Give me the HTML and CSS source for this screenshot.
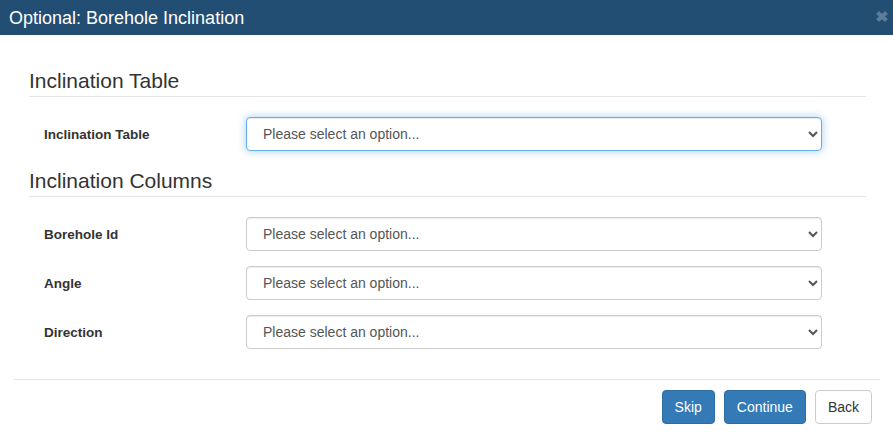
FILE: index.html
```html
<!DOCTYPE html>
<html>
<head>
<meta charset="utf-8">
<link rel="stylesheet" href="styles.css">
</head>
<body>
<div class="modal">
  <div class="modal-header">
    <h4 class="modal-title">Optional: Borehole Inclination</h4>
    <button class="close" type="button" aria-label="Close">
      <svg width="14" height="13" viewBox="0 0 14 13"><path d="M2.5 2.5 L11.5 10.5 M11.5 2.5 L2.5 10.5" stroke="currentColor" stroke-width="4" stroke-linecap="butt"/></svg>
    </button>
  </div>
  <div class="modal-body">
    <div class="legend">Inclination Table</div>
    <div class="form-row">
      <label class="form-label">Inclination Table</label>
      <select class="form-select focused"><option>Please select an option...</option></select>
    </div>
    <div class="legend">Inclination Columns</div>
    <div class="form-row">
      <label class="form-label">Borehole Id</label>
      <select class="form-select"><option>Please select an option...</option></select>
    </div>
    <div class="form-row">
      <label class="form-label">Angle</label>
      <select class="form-select"><option>Please select an option...</option></select>
    </div>
    <div class="form-row">
      <label class="form-label">Direction</label>
      <select class="form-select"><option>Please select an option...</option></select>
    </div>
  </div>
  <div class="modal-footer">
    <button class="btn btn-primary" type="button">Skip</button>
    <button class="btn btn-primary" type="button">Continue</button>
    <button class="btn btn-default" type="button">Back</button>
  </div>
</div>
</body>
</html>
```
FILE: styles.css
```css
* { box-sizing: border-box; }
html, body {
  margin: 0;
  padding: 0;
  background: #ffffff;
  font-family: "Liberation Sans", Arial, sans-serif;
  color: #333333;
}
.modal {
  width: 893px;
  height: 441px;
  background: #ffffff;
}
.modal-header {
  position: relative;
  height: 35px;
  background: #234e74;
  display: flex;
  align-items: center;
  padding: 0 9px;
}
.modal-title {
  margin: 0;
  font-size: 18px;
  font-weight: normal;
  color: #ffffff;
  line-height: 1;
}
.close {
  position: absolute;
  right: 4px;
  top: 10px;
  width: 14px;
  height: 13px;
  padding: 0;
  border: 0;
  background: transparent;
  color: #5d7c9a;
  display: flex;
  align-items: center;
  justify-content: center;
}
.modal-body {
  padding: 31px 27px 15px 29px;
}
.legend {
  font-size: 21px;
  line-height: 30px;
  height: 31px;
  color: #333333;
  border-bottom: 1px solid #e5e5e5;
  margin-bottom: 20px;
}
.form-row {
  display: flex;
  align-items: center;
  height: 34px;
  margin-bottom: 15px;
}
.form-label {
  width: 217px;
  padding-left: 15px;
  font-size: 13.5px;
  font-weight: bold;
  color: #333333;
}
.form-select {
  width: 576px;
  height: 34px;
  padding: 6px 8px 6px 12px;
  font-family: "Liberation Sans", Arial, sans-serif;
  font-size: 14px;
  color: #555555;
  background: #ffffff;
  border: 1px solid #cccccc;
  border-radius: 4px;
  box-shadow: inset 0 1px 1px rgba(0,0,0,.075);
  outline: none;
}
.form-select.focused {
  border-color: #66afe9;
  box-shadow: inset 0 1px 1px rgba(0,0,0,.075), 0 0 8px rgba(102,175,233,.6);
}
.modal-footer {
  margin: 0 13px 0 14px;
  border-top: 1px solid #e5e5e5;
  padding: 10px 8px 0 0;
  display: flex;
  justify-content: flex-end;
  gap: 9px;
}
.btn {
  height: 34px;
  padding: 6px 12px;
  font-family: "Liberation Sans", Arial, sans-serif;
  font-size: 14px;
  line-height: 20px;
  border-radius: 4px;
  border: 1px solid transparent;
}
.btn-primary {
  background: #337ab7;
  border-color: #2e6da4;
  color: #ffffff;
}
.btn-default {
  background: #ffffff;
  border-color: #cccccc;
  color: #333333;
}
```
